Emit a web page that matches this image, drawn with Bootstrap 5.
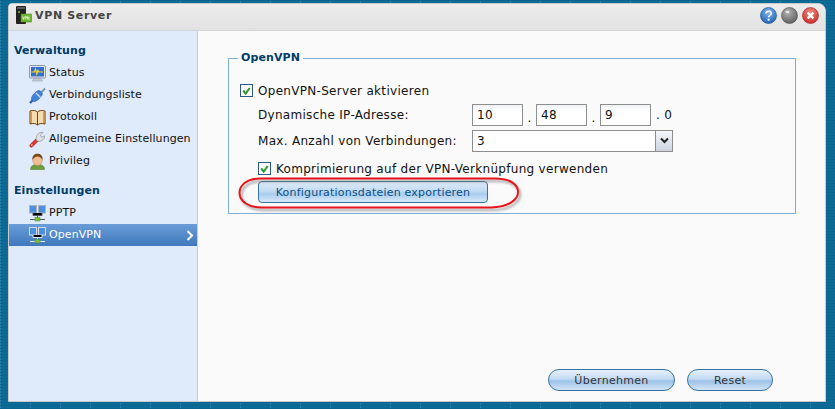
<!DOCTYPE html>
<html lang="de"><head><meta charset="utf-8"><title>VPN Server</title>
<link href="https://cdn.jsdelivr.net/npm/bootstrap@5.3.0/dist/css/bootstrap.min.css" rel="stylesheet">
<style>
html,body{height:409px;overflow:hidden}
body{background:#0d6c96;background-image:linear-gradient(#0a6590 1px,transparent 1px),linear-gradient(90deg,#2a80a8 1px,transparent 1px);background-size:30px 3px;font:11px/14px "DejaVu Sans",sans-serif;color:#111;padding:3px 8px 7px 8px;position:relative}
.vwin{height:399px;width:818px;border:1px solid #c9c9c9;border-radius:4px 8px 0 0;background:#fafafa;display:flex;flex-direction:column;overflow:hidden}
.vtitle{height:27px;flex:none;background:linear-gradient(#ececec,#e2e2e2);border-bottom:1px solid #d4d4d4;display:flex;align-items:center;padding:0 6px 3px 5px;gap:1px}
.vtitle b{font-size:11px;letter-spacing:.65px;color:#444}
.vbody{flex:1;display:flex;min-height:0}
.vside{width:189px;flex:none;background:#dfeafa;border-right:1px solid #c8ccd0;padding-top:13px}
.vhead{font-weight:700;color:#003c66;padding-left:5px;height:14px;margin-bottom:4px;line-height:14px;letter-spacing:.1px}
.vhead.second{margin-top:12px}
.vitem{height:22px;display:flex;align-items:center;padding-left:20px;gap:3px;color:#111;letter-spacing:.08px}
.vitem svg{flex:none}
.vitem.sel{background:linear-gradient(#6a9dd8,#3f78bd);color:#fff}
.vitem .chev{margin-left:auto;margin-right:3px}
.vmain{flex:1;position:relative;display:flex;flex-direction:column;padding:27px 0 0 30px}
.vgroup{width:568px;height:156px;border:1px solid #7eaed2;position:relative;padding:22px 0 0 11px;flex:none;font-size:12px;letter-spacing:.3px}
.vlegend{position:absolute;left:9px;top:-8px;background:#fafafa;padding:0 3px;font-size:11px;font-weight:700;color:#003c66;letter-spacing:.1px}
.vrow{display:flex;align-items:center}
.vr1{height:20px}.vr2{height:25px;margin-top:1px}.vr3{height:25px;margin-top:1px}
.vr4{height:22px;margin-top:5px;padding-left:18px}
.vlab{width:232px;padding-left:18px;white-space:nowrap}
.vinp{width:51px;height:22px;border:1px solid #8e8e8e;border-radius:0;background:linear-gradient(#eef1f5,#fff 6px);padding:0 4px;font:inherit;letter-spacing:inherit;color:#111;box-shadow:none;min-height:0}
.vsep{width:13px;text-align:center;padding-top:6px}
.vtail{margin-left:5px;padding-top:1px}
.vsel{width:201px;height:22px;border:1px solid #8e8e8e;background:#fff;display:flex;align-items:stretch}
.vsel span{flex:1;padding-left:4px;line-height:20px}
.vsel i{width:17px;border-left:1px solid #8e8e8e;background:linear-gradient(#f4f6f9,#ccd5df);display:flex;align-items:center;justify-content:center}
.vpill{height:22px;border:1px solid #34719f;font:11px/14px "DejaVu Sans",sans-serif;padding:1px 0 0;background:linear-gradient(#e6f1fb 0,#c3daf2 45%,#9cc2e8 55%,#d3e5f7 100%);color:#333;letter-spacing:.3px}
.vexp{width:230px;margin:1px 0 0 18px;border-radius:4px;color:#0a4f85;background:linear-gradient(#dcebf8 0,#c2dbf2 45%,#a8cdee 60%,#d8e9f8 100%);letter-spacing:.2px}
.vfoot{margin-top:auto;height:32px;display:flex;gap:12px;padding-left:320px;flex:none}
.vok,.vrs{border-radius:11px}.vok{width:127px}.vrs{width:86px}
.vring{position:absolute;left:237px;top:175px;pointer-events:none}
</style></head><body>
<div class="vwin">
 <div class="vtitle">
  <svg width="20" height="20" viewBox="0 0 20 20"><rect x="2" y="0" width="10" height="18" rx="1" fill="#222"/><rect x="3" y="1" width="8" height="2" fill="#5c5c5c"/><circle cx="5" cy="6" r=".9" fill="#8fd04a"/><rect x="7" y="8" width="10.500" height="8" fill="#6fb82f" stroke="#4f8a1e" stroke-width=".6"/><path d="M8.500 10.500l.9 3 .9-3m.9 3v-3h1.200v1.500H11.200m2.200 1.500v-3l1.600 3v-3" stroke="#fff" stroke-width=".6" fill="none"/></svg>
  <b>VPN Server</b>
  <span class="ms-auto d-flex gap-1">
   <svg width="17" height="17" viewBox="0 0 17 17"><defs><radialGradient id="gb" cy=".3" r=".8"><stop offset="0" stop-color="#7fb6ee"/><stop offset="1" stop-color="#1558a8"/></radialGradient></defs><circle cx="8.500" cy="8.500" r="8" fill="url(#gb)" stroke="#0d4a90" stroke-width=".6"/><path d="M6 6.600c0-3.200 5.200-3.200 5.200-.2 0 2-2.600 1.900-2.600 3.800" fill="none" stroke="#fff" stroke-width="1.600"/><circle cx="8.600" cy="12.700" r="1.100" fill="#fff"/></svg>
   <svg width="17" height="17" viewBox="0 0 17 17"><defs><radialGradient id="gg" cx=".4" cy=".3" r=".8"><stop offset="0" stop-color="#b4b4b4"/><stop offset="1" stop-color="#565656"/></radialGradient></defs><circle cx="8.500" cy="8.500" r="8" fill="url(#gg)" stroke="#4a4a4a" stroke-width=".6"/><ellipse cx="6.500" cy="5" rx="2" ry="1.300" fill="#e8e8e8"/></svg>
   <svg width="17" height="17" viewBox="0 0 17 17"><defs><radialGradient id="gr" cy=".3" r=".8"><stop offset="0" stop-color="#f08a80"/><stop offset="1" stop-color="#c3221c"/></radialGradient></defs><circle cx="8.500" cy="8.500" r="8" fill="url(#gr)" stroke="#a81d18" stroke-width=".6"/><path d="M5.600 5.600l5.800 5.800m0-5.800l-5.800 5.800" stroke="#fff" stroke-width="2.200"/></svg>
  </span>
 </div>
 <div class="vbody">
  <nav class="vside">
   <div class="vhead">Verwaltung</div>
   <div class="vitem"><svg width="17" height="17" viewBox="0 0 17 17"><rect x=".5" y=".5" width="16" height="12.500" rx="1" fill="#e4e8ed" stroke="#8a96a2"/><rect x="2" y="2" width="13" height="9.500" fill="#2f6fd0"/><path d="M2.500 7h3l1-3 1.300 5 1.200-3.800 1 1.800h4" stroke="#f6d32e" stroke-width="1.200" fill="none"/><path d="M5 13.500h7l1.500 2.500h-10z" fill="#c5ccd4" stroke="#8a95a0" stroke-width=".5"/></svg>Status</div>
   <div class="vitem"><svg width="17" height="17" viewBox="0 0 17 17"><path d="M1 16l3-3" stroke="#2f62b0" stroke-width="2.400"/><path d="M12.500 5l3.500-3.500" stroke="#7f92a6" stroke-width="1.800"/><path d="M2.500 11.500C2.800 8.500 6.500 4.500 9.500 3.500c.8-.3 1.300.1 1.800.6l1.500 1.500c.5.500.8 1.100.4 1.900-1.100 2.800-4.800 6.600-7.800 7-.8.100-1.200-.2-1.700-.7l-.7-.7c-.5-.5-.6-1-.5-1.600z" fill="#3f82dc" stroke="#24559e" stroke-width=".6"/><path d="M7 6l4.500 4.500" stroke="#cfd8e2" stroke-width="1.400"/></svg>Verbindungsliste</div>
   <div class="vitem"><svg width="17" height="17" viewBox="0 0 17 17"><path d="M1 2c3-1 6-.5 7.500 1 1.500-1.500 4.500-2 7.500-1v13c-3-1-6-.5-7.500 1-1.500-1.500-4.500-2-7.500-1z" fill="#f5dcae" stroke="#6f4010"/><path d="M8.500 3v13" stroke="#6f4010"/><path d="M2.200 14V2.800M14.800 14V2.800" stroke="#d0913a" stroke-width="1.300"/></svg>Protokoll</div>
   <div class="vitem"><svg width="17" height="17" viewBox="0 0 17 17"><path d="M1 15.800c-.7-1 0-2.200.8-3l5-4.800 2.300 2.300-5 4.900c-1 1-2.300 1.300-3.100.6z" fill="#dc352c" stroke="#9c1f19" stroke-width=".5"/><circle cx="2.800" cy="14" r=".8" fill="#fff"/><path d="M7.500 9.500C6 5 9.500 .5 14 1.500l-2.600 2.800 1.300 1.900 2.900-1.400c.6 3.500-4.500 7.200-8.100 4.700z" fill="#dde0e4" stroke="#7f858c" stroke-width=".6"/></svg>Allgemeine Einstellungen</div>
   <div class="vitem"><svg width="17" height="17" viewBox="0 0 17 17"><path d="M1.500 16.500c0-3.500 2.500-5 7-5s7 1.500 7 5z" fill="#6f9e3c" stroke="#4a7326" stroke-width=".5"/><ellipse cx="8.500" cy="7" rx="4.800" ry="5.500" fill="#f2bd95" stroke="#a87246" stroke-width=".4"/><path d="M3.500 7C3 2.500 5.500.8 8.500.8s5.500 1.700 5 6.200c-.8-2-3.500-3.400-5-3.400s-4.200 1.400-5 3.400z" fill="#7a4a20"/></svg>Privileg</div>
   <div class="vhead second">Einstellungen</div>
   <div class="vitem"><svg width="17" height="17" viewBox="0 0 17 17"><rect x=".5" y=".5" width="7" height="7.500" fill="#4f8fe0" stroke="#aab4be"/><rect x="9.500" y=".5" width="7" height="7.500" fill="#4f8fe0" stroke="#aab4be"/><path d="M4 8v2.500h9V8M8.500 10.500v3M1 14.500h15" stroke="#555"/><rect x="6" y="12.500" width="5" height="3.500" fill="#7ac23c" stroke="#4f8a1e" stroke-width=".5"/></svg>PPTP</div>
   <div class="vitem sel"><svg width="17" height="17" viewBox="0 0 17 17"><rect x=".5" y=".5" width="7" height="7.500" fill="#4f8fe0" stroke="#d6dce2"/><rect x="9.500" y=".5" width="7" height="7.500" fill="#4f8fe0" stroke="#d6dce2"/><path d="M4 8v2.500h9V8M8.500 10.500v3M1 14.500h15" stroke="#e5e8ec"/><rect x="6" y="12.500" width="5" height="3.500" fill="#7ac23c" stroke="#4f8a1e" stroke-width=".5"/></svg>OpenVPN<svg class="chev" width="8" height="11" viewBox="0 0 8 11"><path d="M1.500 1l4.500 4.500L1.500 10" fill="none" stroke="#fff" stroke-width="2"/></svg></div>
  </nav>
  <main class="vmain">
   <section class="vgroup">
    <div class="vlegend">OpenVPN</div>
    <div class="vrow vr1"><svg class="me-1" width="14" height="14" viewBox="0 0 14 14"><rect x=".5" y=".5" width="12" height="12" fill="#fff" stroke="#2a5a85"/><path d="M3.200 6.500l2.500 3 4-5.500" fill="none" stroke="#2c9a2c" stroke-width="2"/></svg><span>OpenVPN-Server aktivieren</span></div>
    <div class="vrow vr2"><div class="vlab">Dynamische IP-Adresse:</div><input class="form-control vinp" value="10"><span class="vsep">.</span><input class="form-control vinp" value="48"><span class="vsep">.</span><input class="form-control vinp" value="9"><span class="vtail">. 0</span></div>
    <div class="vrow vr3"><div class="vlab">Max. Anzahl von Verbindungen:</div><div class="vsel"><span>3</span><i><svg width="9" height="7" viewBox="0 0 9 7"><path d="M1 1.500l3.500 3.500L8 1.500" fill="none" stroke="#222" stroke-width="2"/></svg></i></div></div>
    <div class="vrow vr4"><svg class="me-1" width="14" height="14" viewBox="0 0 14 14"><rect x=".5" y=".5" width="12" height="12" fill="#fff" stroke="#2a5a85"/><path d="M3.200 6.500l2.500 3 4-5.500" fill="none" stroke="#2c9a2c" stroke-width="2"/></svg><span>Komprimierung auf der VPN-Verknüpfung verwenden</span></div>
    <button type="button" class="btn vpill vexp d-block">Konfigurationsdateien exportieren</button>
   </section>
   <div class="vfoot"><button type="button" class="btn vpill vok">Übernehmen</button><button type="button" class="btn vpill vrs">Reset</button></div>
  </main>
 </div>
</div>
<svg class="vring" width="290" height="38" viewBox="0 0 290 38"><defs><filter id="sh" x="-5%" y="-30%" width="110%" height="160%"><feGaussianBlur stdDeviation="1.300"/></filter></defs><path d="M23 3.500H258C274 3.500 281 10 281 17S273 32 254 32.500H25C11 32.500 2.500 26 2.500 18S10 3.500 23 3.500z" fill="none" stroke="#777" stroke-opacity=".55" stroke-width="2.500" filter="url(#sh)" transform="translate(2 2.500)"/><path d="M23 3.500H258C274 3.500 281 10 281 17S273 32 254 32.500H25C11 32.500 2.500 26 2.500 18S10 3.500 23 3.500z" fill="none" stroke="#e8141c" stroke-width="2"/></svg>
</body></html>
